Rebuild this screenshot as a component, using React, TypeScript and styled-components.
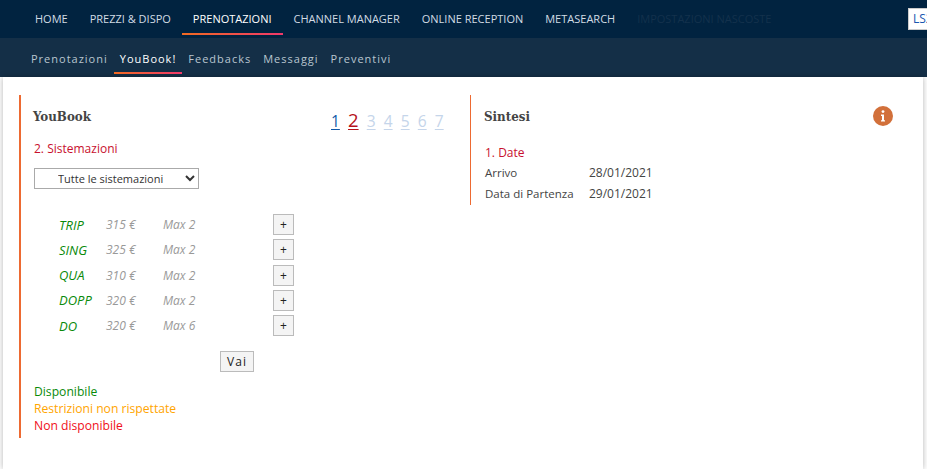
import styled, { createGlobalStyle } from 'styled-components';

const GlobalStyle = createGlobalStyle`
  html, body {
    margin: 0;
    padding: 0;
    background: #fff;
    overflow: hidden;
    font-family: 'Open Sans', 'Liberation Sans', sans-serif;
  }
`;

const TopBar = styled.nav`
  height: 38px;
  background: #012340;
  display: flex;
  padding-left: 24px;
  position: relative;
`;

const TopItem = styled.a<{ $active?: boolean; $ghost?: boolean }>`
  height: 33px;
  padding: 0 11px;
  line-height: 37px;
  font-size: 11px;
  white-space: nowrap;
  color: ${(p) => (p.$ghost ? '#13314c' : p.$active ? '#fff' : '#d2dce4')};
  border-bottom: 2px solid transparent;
  border-image: ${(p) => (p.$active ? 'linear-gradient(90deg, #f26b21, #f0386b) 1' : 'none')};
`;

const StructureBox = styled.div`
  position: absolute;
  left: 908px;
  top: 8px;
  width: 60px;
  height: 22px;
  box-sizing: border-box;
  background: #fff;
  border: 1px solid #ccc;
  padding-left: 4px;
  font-size: 12px;
  line-height: 20px;
  color: #1a56b0;
`;

const SubBar = styled.nav`
  height: 39px;
  background: #142f47;
  display: flex;
  padding-left: 25px;
`;

const SubItem = styled.a<{ $active?: boolean }>`
  height: 34px;
  padding: 0 6px;
  line-height: 42px;
  font-size: 11px;
  letter-spacing: 1px;
  white-space: nowrap;
  color: ${(p) => (p.$active ? '#fff' : '#b9c6d0')};
  border-bottom: 2px solid transparent;
  border-image: ${(p) => (p.$active ? 'linear-gradient(90deg, #f26b21, #f0386b) 1' : 'none')};
`;

const Card = styled.main`
  width: 920px;
  height: 392px;
  margin-left: 3px;
  box-sizing: border-box;
  background: #fff;
  box-shadow: 0 0 6px rgba(0, 0, 0, 0.3);
  padding: 18px 0 0 16px;
  display: flex;
  align-items: flex-start;
`;

const LeftPanel = styled.section`
  width: 451px;
  height: 343px;
  box-sizing: border-box;
  border-left: 2px solid #ed6a32;
  padding-left: 13px;
  position: relative;
`;

const RightPanel = styled.section`
  flex: 1;
  height: 110px;
  border-left: 1px solid #ed6a32;
  padding-left: 14px;
  padding-right: 30px;
`;

const HeadRow = styled.div`
  display: flex;
  justify-content: space-between;
  align-items: flex-start;
`;

const Heading = styled.h2`
  margin: 0 0 0 -1px;
  padding-top: 12px;
  font-family: 'DejaVu Serif Condensed', 'DejaVu Serif', 'Liberation Serif', serif;
  font-size: 13.2px;
  line-height: 20px;
  font-weight: 700;
  color: #444;
`;

const Steps = styled.div`
  position: absolute;
  left: 310px;
  top: 12px;
  display: flex;
  align-items: baseline;
  gap: 8.15px;
`;

const Step = styled.a<{ $state: 'done' | 'current' | 'todo' }>`
  text-decoration: underline;
  text-underline-offset: 2px;
  font-size: ${(p) => (p.$state === 'current' ? '18.5px' : '15.5px')};
  color: ${(p) => (p.$state === 'done' ? '#0f58a8' : p.$state === 'current' ? '#b5121b' : '#c5d5ea')};
`;

const StepTitle = styled.div`
  margin-top: 13px;
  font-size: 12px;
  line-height: 17px;
  color: #c8102e;
`;

const RoomSelect = styled.select`
  display: block;
  width: 165px;
  height: 21px;
  margin-top: 11px;
  box-sizing: border-box;
  background: #fff;
  border: 1px solid #aaa;
  border-radius: 0;
  padding: 0 0 0 19px;
  font-family: inherit;
  font-size: 11px;
  color: #333;
`;

const RoomList = styled.div`
  margin-top: 25px;
  padding-left: 25px;
  display: flex;
  flex-direction: column;
  gap: 4.3px;
`;

const RoomRow = styled.div`
  display: grid;
  grid-template-columns: 47px 57px 110px 21px;
  height: 21px;
  align-items: center;
  font-size: 12px;
  font-style: italic;
`;

const RoomCode = styled.span`
  font-size: 13px;
  color: #0a8a0a;
`;

const RoomInfo = styled.span`
  color: #999;
`;

const PlusButton = styled.button`
  width: 21px;
  height: 21px;
  padding: 0;
  background: #f4f4f4;
  border: 1px solid #bbb;
  font-family: inherit;
  font-size: 12px;
  font-style: normal;
  color: #222;
`;

const GoRow = styled.div`
  margin-top: 13px;
  padding-left: 186px;
`;

const GoButton = styled.button`
  width: 34px;
  height: 21px;
  padding: 0;
  background: #f4f4f4;
  border: 1px solid #bbb;
  font-family: inherit;
  font-size: 12px;
  letter-spacing: 1px;
  color: #222;
`;

const Legend = styled.div`
  margin-top: 11px;
  font-size: 12.15px;
  line-height: 17px;
`;

const LegendItem = styled.div<{ $color: string }>`
  color: ${(p) => p.$color};
`;

const InfoBadge = styled.svg`
  margin-top: 11px;
`;

const SummaryTitle = styled.div`
  margin-top: 16px;
  font-size: 12px;
  line-height: 20px;
  color: #c8102e;
`;

const SummaryRow = styled.div`
  display: grid;
  grid-template-columns: 104px auto;
  justify-content: start;
  font-size: 11.5px;
  line-height: 20.5px;
  color: #444;
`;

const SummaryDate = styled.span`
  font-size: 12px;
`;

const rooms = [
  { code: 'TRIP', price: '315 €', max: 'Max 2' },
  { code: 'SING', price: '325 €', max: 'Max 2' },
  { code: 'QUA', price: '310 €', max: 'Max 2' },
  { code: 'DOPP', price: '320 €', max: 'Max 2' },
  { code: 'DO', price: '320 €', max: 'Max 6' },
];

function App(): JSX.Element {
  return (
    <>
      <GlobalStyle />
      <TopBar>
        <TopItem>HOME</TopItem>
        <TopItem>PREZZI &amp; DISPO</TopItem>
        <TopItem $active>PRENOTAZIONI</TopItem>
        <TopItem>CHANNEL MANAGER</TopItem>
        <TopItem>ONLINE RECEPTION</TopItem>
        <TopItem>METASEARCH</TopItem>
        <TopItem $ghost>IMPOSTAZIONI NASCOSTE</TopItem>
        <StructureBox>LS2</StructureBox>
      </TopBar>
      <SubBar>
        <SubItem>Prenotazioni</SubItem>
        <SubItem $active>YouBook!</SubItem>
        <SubItem>Feedbacks</SubItem>
        <SubItem>Messaggi</SubItem>
        <SubItem>Preventivi</SubItem>
      </SubBar>
      <Card>
        <LeftPanel>
          <Heading>YouBook</Heading>
          <Steps>
            <Step $state="done">1</Step>
            <Step $state="current">2</Step>
            <Step $state="todo">3</Step>
            <Step $state="todo">4</Step>
            <Step $state="todo">5</Step>
            <Step $state="todo">6</Step>
            <Step $state="todo">7</Step>
          </Steps>
          <StepTitle>2. Sistemazioni</StepTitle>
          <RoomSelect>
            <option>Tutte le sistemazioni</option>
          </RoomSelect>
          <RoomList>
            {rooms.map((room) => (
              <RoomRow key={room.code}>
                <RoomCode>{room.code}</RoomCode>
                <RoomInfo>{room.price}</RoomInfo>
                <RoomInfo>{room.max}</RoomInfo>
                <PlusButton>+</PlusButton>
              </RoomRow>
            ))}
          </RoomList>
          <GoRow>
            <GoButton>Vai</GoButton>
          </GoRow>
          <Legend>
            <LegendItem $color="#0a8a0a">Disponibile</LegendItem>
            <LegendItem $color="#ffa500">Restrizioni non rispettate</LegendItem>
            <LegendItem $color="#f01020">Non disponibile</LegendItem>
          </Legend>
        </LeftPanel>
        <RightPanel>
          <HeadRow>
            <Heading>Sintesi</Heading>
            <InfoBadge width="20" height="20" viewBox="0 0 20 20">
              <circle cx="10" cy="10" r="10" fill="#d2703a" />
              <circle cx="10" cy="5.6" r="1.4" fill="#fff" />
              <path d="M8 8.6h3v5.6h1v1.4H8v-1.4h1V10H8z" fill="#fff" />
            </InfoBadge>
          </HeadRow>
          <SummaryTitle>1. Date</SummaryTitle>
          <SummaryRow>
            <span>Arrivo</span>
            <SummaryDate>28/01/2021</SummaryDate>
          </SummaryRow>
          <SummaryRow>
            <span>Data di Partenza</span>
            <SummaryDate>29/01/2021</SummaryDate>
          </SummaryRow>
        </RightPanel>
      </Card>
    </>
  );
}

export default App;
